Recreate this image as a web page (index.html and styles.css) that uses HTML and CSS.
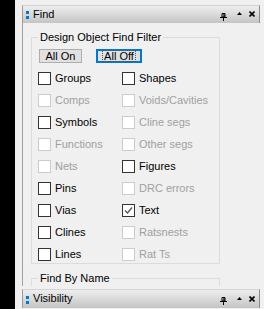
FILE: index.html
```html
<!DOCTYPE html>
<html>
<head>
<meta charset="utf-8">
<link rel="stylesheet" href="styles.css">
</head>
<body>
<div class="screen">
  <div class="strip"></div>
  <div class="dock">
    <div class="panel find">
      <div class="titlebar">
        <span class="grip"><i></i><i></i></span>
        <span class="title">Find</span>
        <span class="tools">
          <svg class="pin" width="7" height="8" viewBox="0 0 7 8"><path d="M2 0.5h3v3.5h-3z" fill="none" stroke="#000" stroke-width="1"/><path d="M4 0.5v4" stroke="#000" stroke-width="1.2"/><path d="M0 4.5h7" stroke="#000" stroke-width="1"/><path d="M3.5 4.5v3.5" stroke="#000" stroke-width="1"/></svg>
          <svg class="up" width="5" height="3" viewBox="0 0 5 3"><path d="M0 3L2.5 0L5 3z" fill="#000"/></svg>
          <svg class="close" width="6" height="6" viewBox="0 0 6 6"><path d="M0.5 0.5L5.5 5.5M5.5 0.5L0.5 5.5" stroke="#000" stroke-width="1.6"/></svg>
        </span>
      </div>
      <div class="panel-body">
        <fieldset class="group filter">
          <legend>Design Object Find Filter</legend>
          <div class="buttons">
            <button class="btn on">All On</button>
            <button class="btn off"><span class="focus">All Off</span></button>
          </div>
          <div class="checks">
            <label class="check"><span class="box"></span>Groups</label>
            <label class="check"><span class="box"></span>Shapes</label>
            <label class="check disabled"><span class="box"></span>Comps</label>
            <label class="check disabled"><span class="box"></span>Voids/Cavities</label>
            <label class="check"><span class="box"></span>Symbols</label>
            <label class="check disabled"><span class="box"></span>Cline segs</label>
            <label class="check disabled"><span class="box"></span>Functions</label>
            <label class="check disabled"><span class="box"></span>Other segs</label>
            <label class="check disabled"><span class="box"></span>Nets</label>
            <label class="check"><span class="box"></span>Figures</label>
            <label class="check"><span class="box"></span>Pins</label>
            <label class="check disabled"><span class="box"></span>DRC errors</label>
            <label class="check"><span class="box"></span>Vias</label>
            <label class="check"><span class="box checked"><svg width="11" height="11" viewBox="0 0 11 11"><path d="M2 5.5L4.5 8L9 2.5" fill="none" stroke="#555" stroke-width="1.3"/></svg></span>Text</label>
            <label class="check"><span class="box"></span>Clines</label>
            <label class="check disabled"><span class="box"></span>Ratsnests</label>
            <label class="check"><span class="box"></span>Lines</label>
            <label class="check disabled"><span class="box"></span>Rat Ts</label>
          </div>
        </fieldset>
        <fieldset class="group byname">
          <legend>Find By Name</legend>
        </fieldset>
      </div>
    </div>
    <div class="panel vis">
      <div class="titlebar">
        <span class="grip"><i></i><i></i></span>
        <span class="title">Visibility</span>
        <span class="tools">
          <svg class="pin" width="7" height="8" viewBox="0 0 7 8"><path d="M2 0.5h3v3.5h-3z" fill="none" stroke="#000" stroke-width="1"/><path d="M4 0.5v4" stroke="#000" stroke-width="1.2"/><path d="M0 4.5h7" stroke="#000" stroke-width="1"/><path d="M3.5 4.5v3.5" stroke="#000" stroke-width="1"/></svg>
          <svg class="up" width="5" height="3" viewBox="0 0 5 3"><path d="M0 3L2.5 0L5 3z" fill="#000"/></svg>
          <svg class="close" width="6" height="6" viewBox="0 0 6 6"><path d="M0.5 0.5L5.5 5.5M5.5 0.5L0.5 5.5" stroke="#000" stroke-width="1.6"/></svg>
        </span>
      </div>
    </div>
  </div>
</div>
</body>
</html>
```

FILE: styles.css
```css
* { box-sizing: border-box; }
html, body { margin: 0; padding: 0; }
body {
  width: 264px;
  height: 309px;
  overflow: hidden;
  background: #f0f0f0;
  font-family: "Liberation Sans", Arial, sans-serif;
  font-size: 11px;
  color: #000;
}
.screen {
  display: flex;
  height: 309px;
}
.strip {
  width: 15px;
  flex: none;
  background: #000;
}
.dock {
  width: 245px;
  padding: 5px 0 0 7px;
  display: flex;
  flex-direction: column;
}
.titlebar {
  height: 18px;
  display: flex;
  align-items: center;
  background: linear-gradient(#eeeeee, #c4c4c4);
  border-left: 1px solid #9c9c9c;
  border-right: 1px solid #8c8c8c;
  border-top: 1px solid #d4d4d4;
  padding-left: 3px;
  padding-right: 4px;
}
.grip {
  display: flex;
  flex-direction: column;
  gap: 2px;
  width: 3px;
  margin-right: 4px;
  margin-top: 1px;
}
.grip i {
  display: block;
  width: 3px;
  height: 3px;
  background: #0078d7;
}
.title {
  flex: 1;
  line-height: 13px;
  margin-top: -1px;
}
.tools {
  display: flex;
  align-items: center;
  height: 100%;
}
.tools .pin { margin-top: 4px; margin-right: 10px; }
.tools .up { margin-top: -2px; margin-right: 7px; }
.tools .close { margin-top: -1px; }
.panel-body {
  height: 263px;
  border-left: 1px solid #a0a0a0;
  padding: 7px 0 0 8px;
  overflow: hidden;
}
.group {
  width: 189px;
  margin: 0;
  padding: 0 0 0 6px;
  border: 1px solid #dcdcdc;
  min-inline-size: 0;
}
.group legend {
  padding: 0 2px;
  margin-left: 0;
  line-height: 14px;
  height: 14px;
}
.buttons {
  display: flex;
  gap: 14px;
  margin-top: 5px;
  padding-left: 1px;
}
.btn {
  height: 14px;
  padding: 0;
  font: inherit;
  line-height: 12px;
  background: #e1e1e1;
  border: 1px solid #adadad;
  color: #000;
  display: flex;
  align-items: center;
  justify-content: center;
}
.btn.on { width: 43px; }
.btn.off {
  width: 46px;
  border: 2px solid #0078d7;
}
.focus {
  outline: 1px dotted #555;
  outline-offset: 0;
  padding: 0 1px;
  line-height: 10px;
}
.checks {
  display: grid;
  grid-template-columns: 84px 1fr;
  grid-auto-rows: 13px;
  row-gap: 9px;
  margin-top: 9px;
  margin-bottom: 2px;
}
.check {
  display: flex;
  align-items: center;
  gap: 4px;
  line-height: 13px;
  white-space: nowrap;
}
.box {
  width: 13px;
  height: 13px;
  flex: none;
  border: 1px solid #333;
  background: #fff;
  display: flex;
  align-items: center;
  justify-content: center;
}
.check.disabled { color: #a0a0a0; }
.check.disabled .box { border-color: #cccccc; }
.byname {
  margin-top: 7px;
  height: 30px;
}
.vis {
  margin-top: 3px;
}
.vis .titlebar { height: 19px; }
```
